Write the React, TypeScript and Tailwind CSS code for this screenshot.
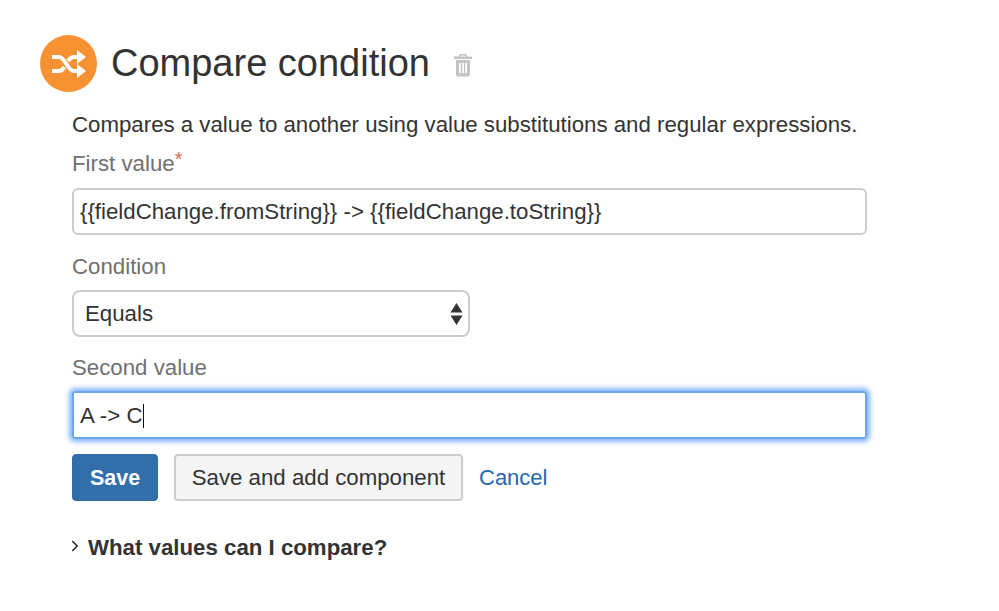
import { ChevronRight } from "lucide-react";

function ShuffleIcon() {
  return (
    <svg width="34" height="28" viewBox="0 0 34 28" fill="none">
      <path d="M0 7h7c6.500 0 8 14 15 14h4" stroke="white" strokeWidth="4" />
      <path d="M0 21h7c2.500 0 4-1.800 5.500-4M16 11c1.500-2.200 3-4 6-4h4" stroke="white" strokeWidth="4" />
      <path d="M25 0l9 7-9 7zM25 14l9 7-9 7z" fill="white" />
    </svg>
  );
}

function TrashIcon() {
  return (
    <svg width="18" height="23" viewBox="0 0 18 23" fill="#c4c4c4">
      <path d="M6 0h6l1.500 2.500H18V5H0V2.500h4.500zM7 1.500L6.300 2.500h5.400L11 1.500z" />
      <path d="M2 6h14v14.500a2 2 0 0 1-2 2H4a2 2 0 0 1-2-2zM5 9v10h1.800V9zm3.100 0v10h1.800V9zm3.100 0v10H13V9z" fillRule="evenodd" />
    </svg>
  );
}

export default function App() {
  return (
    <div className="h-[611px] w-[999px] bg-white pt-[35px] pl-10 text-[#333] font-['Liberation_Sans',Arial,sans-serif]">
      <div className="flex items-center">
        <div className="flex h-[57px] w-[57px] items-center justify-center rounded-full bg-[#f79232]">
          <ShuffleIcon />
        </div>
        <h1 className="ml-[14px] text-[38px] leading-[57px] font-normal">Compare condition</h1>
        <div className="ml-[24px] mt-[3px]">
          <TrashIcon />
        </div>
      </div>

      <div className="ml-8 w-[795px]">
        <p className="mt-[19px] text-[22.250px] leading-[28px] whitespace-nowrap">
          Compares a value to another using value substitutions and regular expressions.
        </p>

        <label className="mt-[11px] block text-[22.250px] leading-[28px] text-[#707070]">
          First value<span className="relative -top-[5px] text-[20px] leading-none text-[#e0685c]">*</span>
        </label>
        <div className="mt-[10px] flex h-[47px] items-center rounded-md border-2 border-[#ccc] pl-1.5 pt-px text-[22.250px]">
          {"{{fieldChange.fromString}} -> {{fieldChange.toString}}"}
        </div>

        <label className="mt-[18px] block text-[22.250px] leading-[28px] text-[#707070]">Condition</label>
        <div className="mt-[9px] flex h-[47px] w-[398px] items-center justify-between rounded-lg border-2 border-[#ccc] pl-[11px] pr-[5px] pt-px text-[22.250px]">
          Equals
          <svg width="13" height="22" viewBox="0 0 13 22" fill="#333">
            <path d="M6.500 0L12.500 9.500H0.500zM6.500 22L0.500 12.500H12.500z" />
          </svg>
        </div>

        <label className="mt-[17px] block text-[22.250px] leading-[28px] text-[#707070]">Second value</label>
        <div className="mt-[9px] flex h-[48px] items-center rounded-[3px] border-2 border-[#6aa6ec] pl-1.5 pt-px text-[22.250px] shadow-[0_0_5px_3px_rgba(120,175,245,0.9)]">
          A -&gt; C<span className="ml-px h-[24px] w-px bg-[#111]" />
        </div>

        <div className="mt-[15px] flex items-center">
          <button className="h-[47px] w-[86px] rounded-[4px] border border-[#2d6ca8] bg-[#326ea9] pt-px text-[21.500px] font-bold text-white">
            Save
          </button>
          <button className="ml-4 h-[47px] w-[289px] rounded-[4px] border-2 border-[#ccc] bg-[#f5f5f5] pt-px text-[22.250px]">
            Save and add component
          </button>
          <a className="ml-4 text-[22px] text-[#2468b0]">Cancel</a>
        </div>

        <div className="mt-[33px] flex items-center">
          <ChevronRight size={18} strokeWidth={2} className="-ml-[6px] -mt-1 text-[#222]" />
          <span className="ml-1 text-[22.250px] leading-[28px] font-bold">What values can I compare?</span>
        </div>
      </div>
    </div>
  );
}
